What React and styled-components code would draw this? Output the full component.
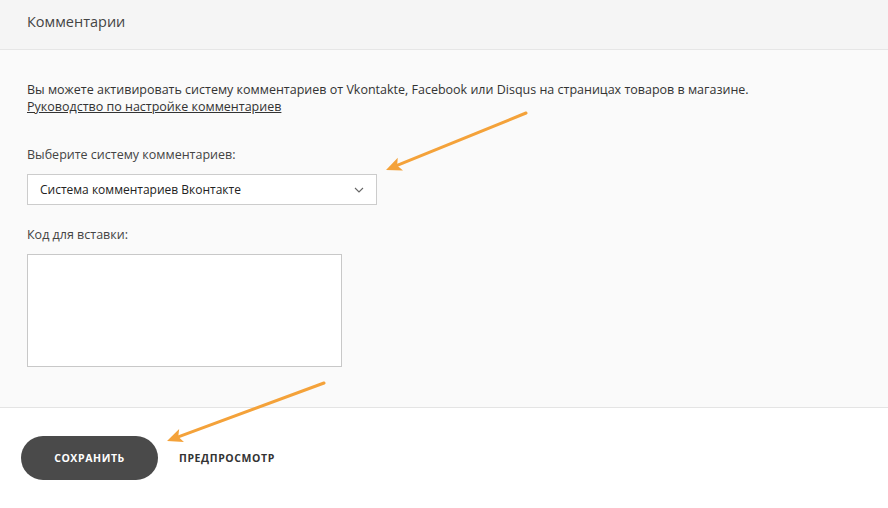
import React from "react";
import styled, { createGlobalStyle } from "styled-components";

const GlobalStyle = createGlobalStyle`
	body {
		margin: 0;
		background: #ffffff;
		font-family: "Open Sans", "Liberation Sans", sans-serif;
		color: #333333;
	}
`;

const Page = styled.div`
	position: relative;
	width: 888px;
	height: 508px;
	overflow: hidden;
`;

const Header = styled.div`
	height: 50px;
	box-sizing: border-box;
	background: #f5f5f5;
	border-bottom: 1px solid #e6e6e6;
	display: flex;
	align-items: center;
	padding: 0 27px 6px;
	font-size: 14.5px;
	color: #444;
`;

const Body = styled.div`
	background: #fafafa;
	height: 358px;
	box-sizing: border-box;
	border-bottom: 1px solid #e4e4e4;
	padding: 0 27px;
	display: flex;
	flex-direction: column;
`;

const Intro = styled.p`
	margin: 31px 0 0;
	font-size: 12.5px;
	line-height: 17px;
	color: #333;
`;

const GuideLink = styled.a`
	color: #333;
	text-decoration: underline;
`;

const Label = styled.div`
	margin-top: ${({ top }) => top}px;
	font-size: 12.5px;
	line-height: 17px;
	color: #444;
`;

const Select = styled.div`
	margin-top: 11px;
	width: 350px;
	height: 31px;
	box-sizing: border-box;
	background: #fff;
	border: 1px solid #cccccc;
	display: flex;
	align-items: center;
	justify-content: space-between;
	padding: 0 12px;
	font-size: 12px;
	color: #222;
`;

const TextArea = styled.div`
	margin-top: 11px;
	width: 315px;
	height: 113px;
	box-sizing: border-box;
	background: #fff;
	border: 1px solid #c8c8c8;
`;

const Footer = styled.div`
	display: flex;
	align-items: center;
	padding: 28px 21px 0;
	gap: 21px;
`;

const SaveButton = styled.button`
	width: 137px;
	height: 44px;
	border: none;
	border-radius: 22px;
	background: #4a4a4a;
	color: #fff;
	font-family: "Open Sans", "Liberation Sans", sans-serif;
	font-weight: 700;
	font-size: 10.5px;
	letter-spacing: 0.6px;
	cursor: pointer;
`;

const PreviewButton = styled.button`
	border: none;
	background: none;
	padding: 0;
	color: #333;
	font-family: "Open Sans", "Liberation Sans", sans-serif;
	font-weight: 700;
	font-size: 10.5px;
	letter-spacing: 0.6px;
	cursor: pointer;
`;

const Arrow = styled.svg`
	position: absolute;
	left: 0;
	top: 0;
	pointer-events: none;
`;

function ArrowLine({ x1, y1, x2, y2 }) {
	const a = Math.atan2(y2 - y1, x2 - x1);
	const len = 17;
	const w = 0.42;
	const p1 = [x2 - len * Math.cos(a - w), y2 - len * Math.sin(a - w)];
	const p2 = [x2 - len * Math.cos(a + w), y2 - len * Math.sin(a + w)];
	const bx = x2 - 12 * Math.cos(a);
	const by = y2 - 12 * Math.sin(a);
	return (
		<g>
			<line x1={x1} y1={y1} x2={bx} y2={by} stroke="#f4a23a" strokeWidth="3" strokeLinecap="round" />
			<polygon points={`${x2},${y2} ${p1[0]},${p1[1]} ${bx},${by} ${p2[0]},${p2[1]}`} fill="#f4a23a" />
		</g>
	);
}

export default function App() {
	return (
		<Page>
			<GlobalStyle />
			<Header>Комментарии</Header>
			<Body>
				<Intro>
					Вы можете активировать систему комментариев от Vkontakte, Facebook или Disqus на страницах товаров в магазине.
					<br />
					<GuideLink href="#">Руководство по настройке комментариев</GuideLink>
				</Intro>
				<Label top={31}>Выберите систему комментариев:</Label>
				<Select>
					<span>Система комментариев Вконтакте</span>
					<svg width="10" height="6" viewBox="0 0 10 6">
						<path d="M1 1l4 4 4-4" fill="none" stroke="#666" strokeWidth="1.1" />
					</svg>
				</Select>
				<Label top={21}>Код для вставки:</Label>
				<TextArea />
			</Body>
			<Footer>
				<SaveButton>СОХРАНИТЬ</SaveButton>
				<PreviewButton>ПРЕДПРОСМОТР</PreviewButton>
			</Footer>
			<Arrow width="888" height="508">
				<ArrowLine x1={526} y1={113} x2={386} y2={170} />
				<ArrowLine x1={324} y1={383} x2={167} y2={441} />
			</Arrow>
		</Page>
	);
}
